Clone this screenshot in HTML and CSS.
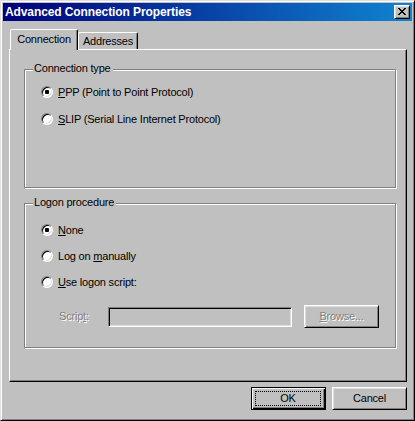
FILE: index.html
```html
<!DOCTYPE html>
<html>
<head>
<meta charset="utf-8">
<title>Advanced Connection Properties</title>
<link rel="stylesheet" href="styles.css">
</head>
<body>
<div class="window">
  <div class="titlebar">
    <span class="title">Advanced Connection Properties</span>
    <div class="close">
      <svg width="8" height="7" viewBox="0 0 8 7" shape-rendering="crispEdges"><path fill="#000" d="M0 0h2v1H0zM6 0h2v1H6zM1 1h2v1H1zM5 1h2v1H5zM2 2h4v1H2zM3 3h2v1H3zM2 4h4v1H2zM1 5h2v1H1zM5 5h2v1H5zM0 6h2v1H0zM6 6h2v1H6z"/></svg>
    </div>
  </div>
  <div class="content">
    <div class="tabs">
      <div class="tab active">Connection</div>
      <div class="tab">Addresses</div>
    </div>
    <div class="panel">
      <div class="group group-type">
        <span class="legend">Connection type</span>
        <div class="option"><span class="radio checked"></span><span class="label"><u>P</u>PP (Point to Point Protocol)</span></div>
        <div class="option"><span class="radio"></span><span class="label"><u>S</u>LIP (Serial Line Internet Protocol)</span></div>
      </div>
      <div class="group group-logon">
        <span class="legend">Logon procedure</span>
        <div class="option"><span class="radio checked"></span><span class="label"><u>N</u>one</span></div>
        <div class="option"><span class="radio"></span><span class="label">Log on <u>m</u>anually</span></div>
        <div class="option"><span class="radio"></span><span class="label"><u>U</u>se logon script:</span></div>
        <div class="script-row">
          <span class="script-label disabled">Scrip<u>t</u>:</span>
          <span class="input"></span>
          <div class="btn browse"><span class="disabled"><u>B</u>rowse...</span></div>
        </div>
      </div>
    </div>
    <div class="buttons">
      <div class="btn default"><span class="focus">OK</span></div>
      <div class="btn">Cancel</div>
    </div>
  </div>
</div>
</body>
</html>
```
FILE: styles.css
```css
html, body {
  margin: 0;
  padding: 0;
  background: #c0c0c0;
  overflow: hidden;
}

body {
  font-family: "Liberation Sans", Arial, sans-serif;
  font-size: 11px;
  letter-spacing: -0.2px;
  color: #000;
}

.window {
  width: 415px;
  height: 421px;
  box-sizing: border-box;
  border: 1px solid;
  border-color: #dfdfdf #000 #000 #dfdfdf;
  box-shadow: inset 1px 1px 0 #fff, inset -1px -1px 0 #808080;
  padding: 2px;
  background: #c0c0c0;
  display: flex;
  flex-direction: column;
}

.titlebar {
  height: 18px;
  display: flex;
  align-items: center;
  justify-content: space-between;
  background: linear-gradient(90deg, #00007b, #1084d0);
  padding: 0 2px 0 2px;
}

.title {
  color: #fff;
  font-weight: bold;
  font-size: 12px;
  letter-spacing: -0.1px;
  line-height: 14px;
  white-space: nowrap;
}

.close {
  width: 16px;
  height: 14px;
  box-sizing: border-box;
  border: 1px solid;
  border-color: #fff #000 #000 #fff;
  box-shadow: inset 1px 1px 0 #dfdfdf, inset -1px -1px 0 #808080;
  background: #c0c0c0;
  padding: 2px 0 0 3px;
}

.close svg {
  display: block;
}

.content {
  padding: 8px 5px 0 6px;
  display: flex;
  flex-direction: column;
}

.tabs {
  height: 20px;
  display: flex;
  align-items: flex-end;
  padding-left: 1px;
  position: relative;
  z-index: 1;
}

.tab {
  box-sizing: border-box;
  height: 17px;
  width: 60px;
  border-top: 1px solid #fff;
  border-left: 1px solid #fff;
  border-right: 1px solid #000;
  border-radius: 2px 2px 0 0;
  box-shadow: inset -1px 0 0 #808080;
  background: #c0c0c0;
  display: flex;
  align-items: center;
  justify-content: center;
  line-height: 13px;
}

.tab.active {
  width: 68px;
  height: 21px;
  margin-bottom: -1px;
  padding-bottom: 1px;
}

.panel {
  height: 333px;
  box-sizing: border-box;
  border: 1px solid;
  border-color: #fff #000 #000 #fff;
  box-shadow: inset -1px -1px 0 #808080;
  padding: 19px 10px 0 14px;
  display: flex;
  flex-direction: column;
}

.group {
  position: relative;
  box-sizing: border-box;
  border: 1px solid #808080;
  box-shadow: inset 1px 1px 0 #fff, 1px 1px 0 #fff;
  display: flex;
  flex-direction: column;
}

.group-type {
  height: 119px;
  padding: 16px 0 0 16px;
  gap: 15px;
}

.group-logon {
  margin-top: 15px;
  height: 145px;
  padding: 20px 0 0 16px;
  gap: 14px;
}

.legend {
  position: absolute;
  top: -8px;
  left: 8px;
  padding: 0 2px 0 1px;
  background: #c0c0c0;
  line-height: 13px;
}

.option {
  display: flex;
  align-items: center;
  height: 12px;
  gap: 5px;
  line-height: 13px;
  white-space: nowrap;
}

.radio {
  position: relative;
  width: 12px;
  height: 12px;
  box-sizing: border-box;
  border-radius: 50%;
  border: 1px solid;
  border-color: #808080 #fff #fff #808080;
  box-shadow: inset 1px 1px 0 #000, inset -1px -1px 0 #dfdfdf;
  background: #fff;
  flex: none;
}

.radio.checked::after {
  content: "";
  position: absolute;
  left: 3px;
  top: 3px;
  width: 4px;
  height: 4px;
  border-radius: 1px;
  background: #000;
}

.disabled {
  color: #808080;
  text-shadow: 1px 1px 0 #fff;
}

.script-row {
  display: flex;
  align-items: center;
  margin-top: 3px;
  padding-left: 18px;
  height: 23px;
}

.script-label {
  width: 49px;
  line-height: 13px;
}

.input {
  width: 184px;
  height: 20px;
  box-sizing: border-box;
  border: 1px solid;
  border-color: #808080 #fff #fff #808080;
  box-shadow: inset 1px 1px 0 #000, inset -1px -1px 0 #dfdfdf;
  background: #c0c0c0;
  margin-right: 12px;
}

.btn {
  width: 75px;
  height: 23px;
  box-sizing: border-box;
  border: 1px solid;
  border-color: #fff #000 #000 #fff;
  box-shadow: inset 1px 1px 0 #dfdfdf, inset -1px -1px 0 #808080;
  background: #c0c0c0;
  display: flex;
  align-items: center;
  justify-content: center;
  line-height: 13px;
}

.buttons {
  margin-top: 5px;
  display: flex;
  justify-content: flex-end;
  gap: 6px;
}

.btn.default {
  border: 1px solid #000;
  box-shadow: inset 1px 1px 0 #fff, inset -1px -1px 0 #000, inset -2px -2px 0 #808080;
  padding: 3px 4px 3px 3px;
  align-items: stretch;
}

.focus {
  flex: 1;
  border: 1px dotted #000;
  display: flex;
  align-items: center;
  justify-content: center;
}
```
